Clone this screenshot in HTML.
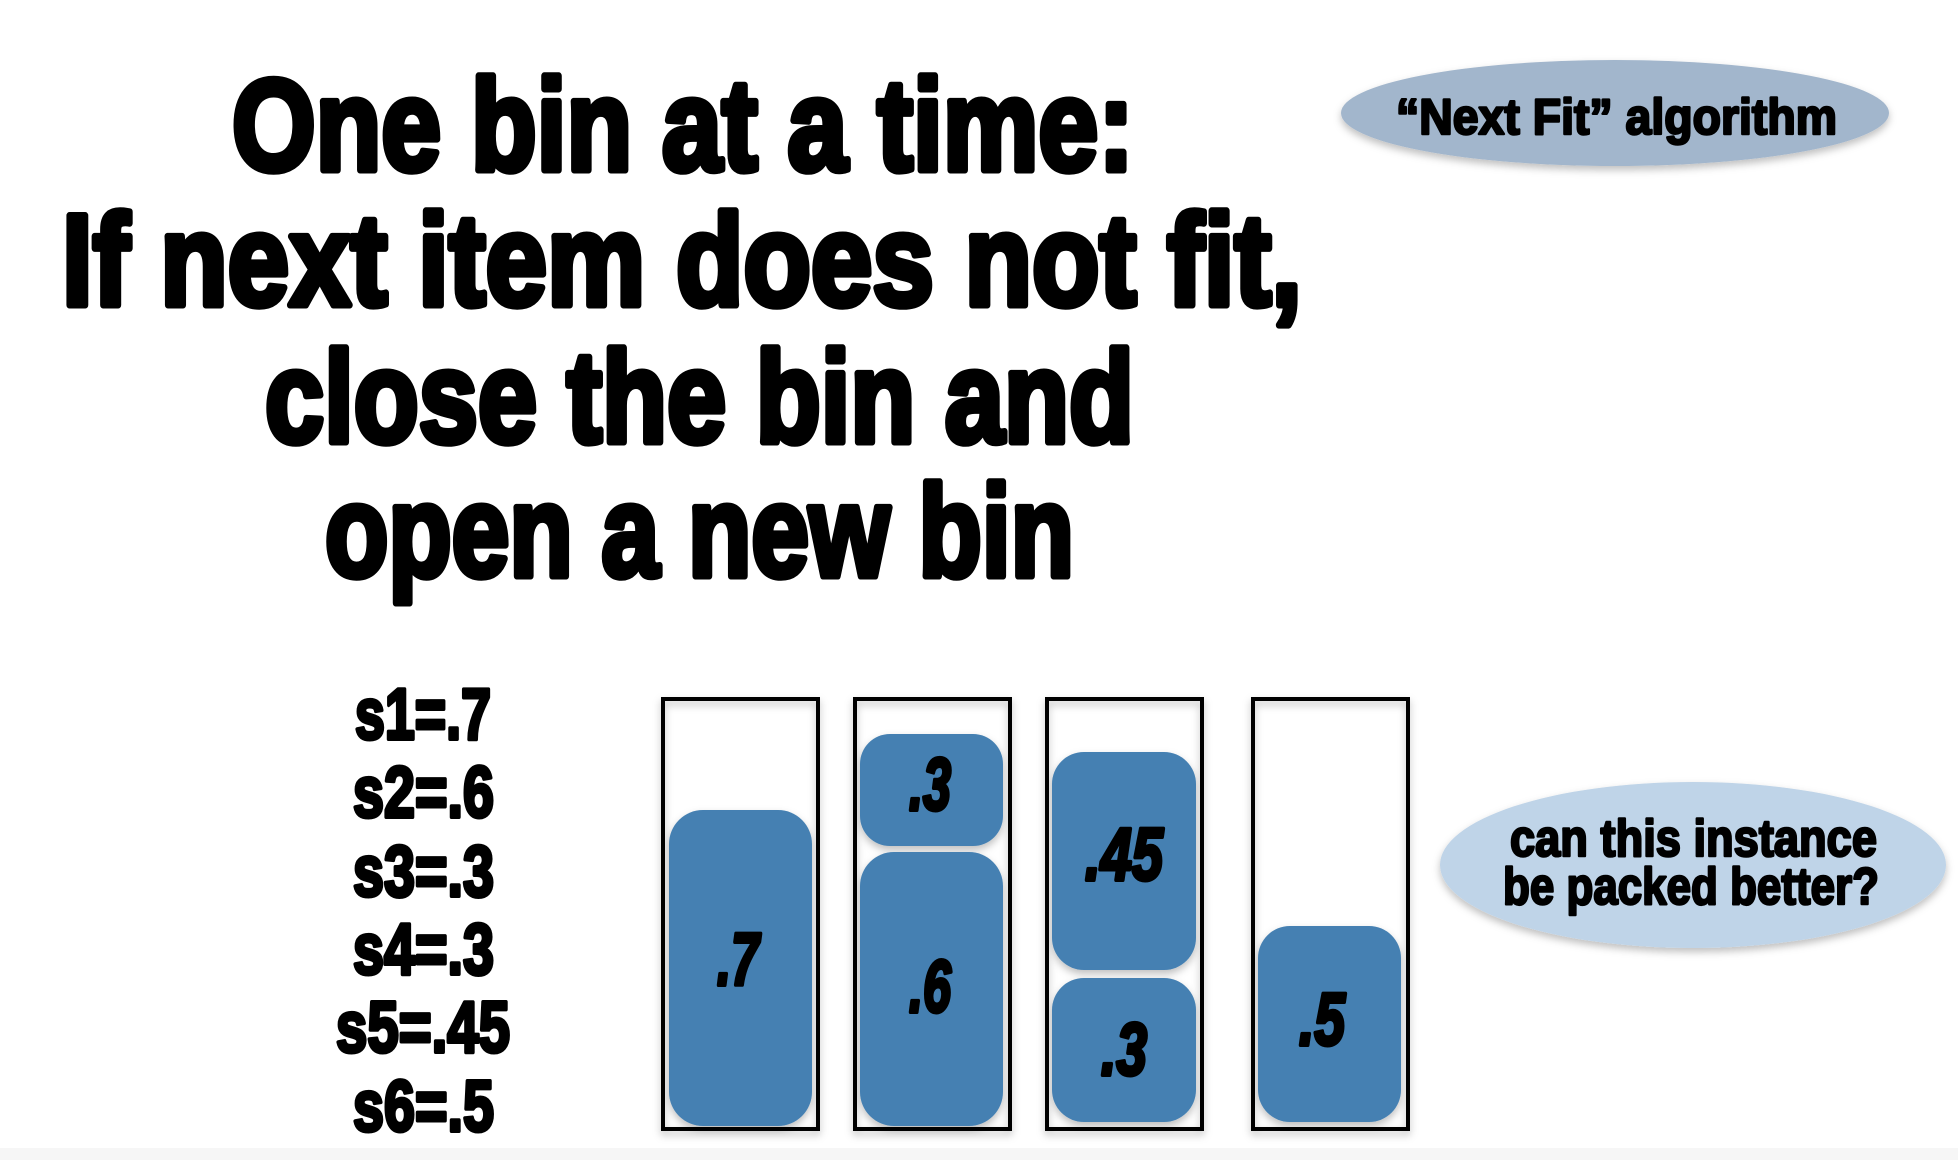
<!DOCTYPE html>
<html><head><meta charset="utf-8"><style>
html,body{margin:0;padding:0;background:#fff;width:1958px;height:1160px;overflow:hidden}
svg{display:block}
text{font-family:"Liberation Sans",sans-serif;font-weight:bold;fill:#000;stroke:#000;stroke-linejoin:round;stroke-linecap:round}
</style></head><body>
<svg width="1958" height="1160" viewBox="0 0 1958 1160" xmlns="http://www.w3.org/2000/svg">
<defs>
<filter id="sh" x="-10%" y="-10%" width="120%" height="130%"><feDropShadow dx="0" dy="4" stdDeviation="4" flood-color="#000" flood-opacity="0.25"/></filter>
</defs>
<rect x="0" y="1148" width="1958" height="12" fill="#f6f6f6"/>
<!-- title -->
<g font-size="130" stroke-width="7">
<text x="232" y="170" textLength="902" lengthAdjust="spacingAndGlyphs">One bin at a time:</text>
<text x="62" y="305" textLength="1240" lengthAdjust="spacingAndGlyphs">If next item does not fit,</text>
<text x="265" y="442" textLength="869" lengthAdjust="spacingAndGlyphs">close the bin and</text>
<text x="325" y="576" textLength="749" lengthAdjust="spacingAndGlyphs">open a new bin</text>
</g>
<!-- oval 1 -->
<ellipse cx="1615" cy="113" rx="274" ry="53" fill="#a2b6cc" filter="url(#sh)"/>
<text x="1396" y="134" font-size="50" stroke-width="2.5" textLength="441" lengthAdjust="spacingAndGlyphs">“Next Fit” algorithm</text>
<!-- oval 2 -->
<ellipse cx="1693" cy="865" rx="253" ry="83" fill="#bfd4e8" filter="url(#sh)"/>
<g font-size="52" stroke-width="2.5">
<text x="1510" y="856" textLength="367" lengthAdjust="spacingAndGlyphs">can this instance</text>
<text x="1503" y="904" textLength="376" lengthAdjust="spacingAndGlyphs">be packed better?</text>
</g>
<!-- labels -->
<g font-size="72" stroke-width="4">
<text x="355" y="739" textLength="136" lengthAdjust="spacingAndGlyphs">s1=.7</text>
<text x="353" y="817" textLength="141" lengthAdjust="spacingAndGlyphs">s2=.6</text>
<text x="353" y="896" textLength="141" lengthAdjust="spacingAndGlyphs">s3=.3</text>
<text x="353" y="974" textLength="141" lengthAdjust="spacingAndGlyphs">s4=.3</text>
<text x="336" y="1052" textLength="174" lengthAdjust="spacingAndGlyphs">s5=.45</text>
<text x="353" y="1131" textLength="141" lengthAdjust="spacingAndGlyphs">s6=.5</text>
</g>
<!-- bins -->
<g fill="none" stroke="#000" stroke-width="4" filter="url(#sh)">
<rect x="663" y="699" width="155" height="430"/>
<rect x="855" y="699" width="155" height="430"/>
<rect x="1047" y="699" width="155" height="430"/>
<rect x="1253" y="699" width="155" height="430"/>
</g>
<!-- blocks -->
<g fill="#4580b2" filter="url(#sh)">
<rect x="669" y="810" width="143" height="316" rx="34"/>
<rect x="860" y="734" width="143" height="112" rx="30"/>
<rect x="860" y="852" width="143" height="274" rx="34"/>
<rect x="1052" y="752" width="144" height="218" rx="32"/>
<rect x="1052" y="978" width="144" height="144" rx="32"/>
<rect x="1258" y="926" width="143" height="196" rx="32"/>
</g>
<g font-size="74" font-style="italic" text-anchor="middle" stroke-width="4">
<text x="738" y="985" textLength="42" lengthAdjust="spacingAndGlyphs">.7</text>
<text x="930" y="810" textLength="42" lengthAdjust="spacingAndGlyphs">.3</text>
<text x="930" y="1012" textLength="42" lengthAdjust="spacingAndGlyphs">.6</text>
<text x="1124" y="880" textLength="78" lengthAdjust="spacingAndGlyphs">.45</text>
<text x="1124" y="1075" textLength="46" lengthAdjust="spacingAndGlyphs">.3</text>
<text x="1322" y="1045" textLength="46" lengthAdjust="spacingAndGlyphs">.5</text>
</g>
</svg>
</body></html>
